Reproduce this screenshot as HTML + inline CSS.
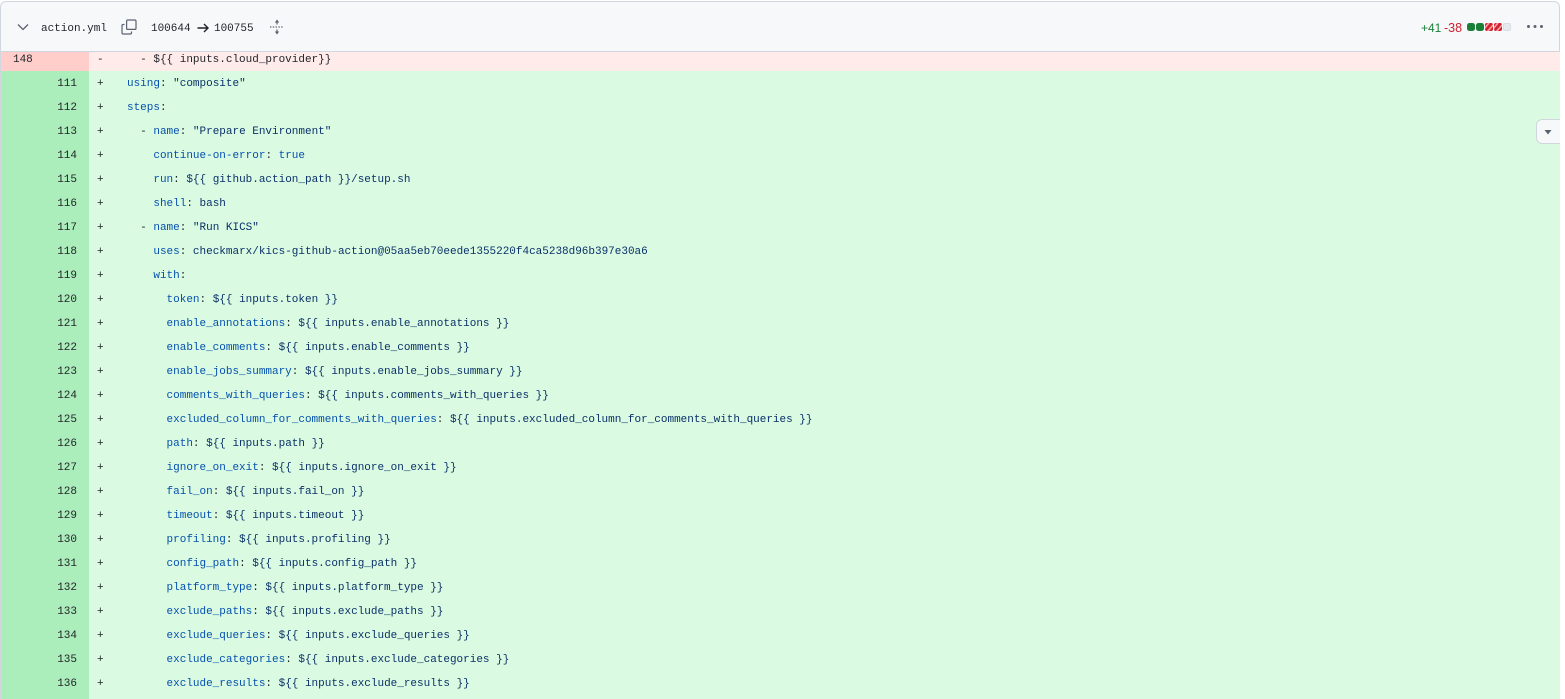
<!DOCTYPE html>
<html>
<head>
<meta charset="utf-8">
<style>
html,body{margin:0;padding:0;width:1565px;height:699px;overflow:hidden;background:#fff}
body{position:relative;font-family:"Liberation Mono",monospace;font-size:11px;letter-spacing:-.01px;color:#1f2328}
#box{position:absolute;left:0;top:0;width:1560px;height:699px;overflow:hidden}
#hdr{position:absolute;left:0;top:1px;width:1558px;height:49px;background:#f6f8fa;border:1px solid #d0d7de;border-top-left-radius:6px;border-top-right-radius:6px}
#body{position:absolute;left:0;top:52px;width:1560px;height:647px;background:#dafbe1}
#edge{position:absolute;left:0;top:52px;width:1px;height:647px;background:#d0d7de}
.a{position:absolute;white-space:pre;line-height:14px}
.row{position:absolute;left:0;width:1560px;height:24px;line-height:24px;white-space:pre}
.g{position:absolute;left:0;top:0;width:89px;height:100%;background:#aceebb}
.n{position:absolute;left:0;width:77px;text-align:right;top:1px;color:#1f2328}
.s{position:absolute;left:97px;top:1px}
.c{position:absolute;left:127px;top:1px;color:#0a3069}
.c i{font-style:normal;color:#0550ae}
.c b{font-weight:normal;color:#1f2328}
.del{top:52px;height:19px;line-height:15px;background:#ffebe9}
.del .g{background:#ffcecb}
.del .n,.del .s,.del .c{top:1px;line-height:15px}
</style>
</head>
<body>
<div id="box">
<div id="body"></div>
<div class="row del"><span class="g"></span><span class="n" style="left:13px;width:auto;text-align:left">148</span><span class="s">-</span><span class="c" style="color:#1f2328">  - ${{ inputs.cloud_provider}}</span></div>
<div class="row" style="top:71px"><span class="g"></span><span class="n">111</span><span class="s">+</span><span class="c"><i>using</i><b>:</b> "composite"</span></div>
<div class="row" style="top:95px"><span class="g"></span><span class="n">112</span><span class="s">+</span><span class="c"><i>steps</i><b>:</b></span></div>
<div class="row" style="top:119px"><span class="g"></span><span class="n">113</span><span class="s">+</span><span class="c"><b>  - </b><i>name</i><b>:</b> "Prepare Environment"</span></div>
<div class="row" style="top:143px"><span class="g"></span><span class="n">114</span><span class="s">+</span><span class="c">    <i>continue-on-error</i><b>:</b> <i>true</i></span></div>
<div class="row" style="top:167px"><span class="g"></span><span class="n">115</span><span class="s">+</span><span class="c">    <i>run</i><b>:</b> ${{ github.action_path }}/setup.sh</span></div>
<div class="row" style="top:191px"><span class="g"></span><span class="n">116</span><span class="s">+</span><span class="c">    <i>shell</i><b>:</b> bash</span></div>
<div class="row" style="top:215px"><span class="g"></span><span class="n">117</span><span class="s">+</span><span class="c"><b>  - </b><i>name</i><b>:</b> "Run KICS"</span></div>
<div class="row" style="top:239px"><span class="g"></span><span class="n">118</span><span class="s">+</span><span class="c">    <i>uses</i><b>:</b> checkmarx/kics-github-action@05aa5eb70eede1355220f4ca5238d96b397e30a6</span></div>
<div class="row" style="top:263px"><span class="g"></span><span class="n">119</span><span class="s">+</span><span class="c">    <i>with</i><b>:</b></span></div>
<div class="row" style="top:287px"><span class="g"></span><span class="n">120</span><span class="s">+</span><span class="c">      <i>token</i><b>:</b> ${{ inputs.token }}</span></div>
<div class="row" style="top:311px"><span class="g"></span><span class="n">121</span><span class="s">+</span><span class="c">      <i>enable_annotations</i><b>:</b> ${{ inputs.enable_annotations }}</span></div>
<div class="row" style="top:335px"><span class="g"></span><span class="n">122</span><span class="s">+</span><span class="c">      <i>enable_comments</i><b>:</b> ${{ inputs.enable_comments }}</span></div>
<div class="row" style="top:359px"><span class="g"></span><span class="n">123</span><span class="s">+</span><span class="c">      <i>enable_jobs_summary</i><b>:</b> ${{ inputs.enable_jobs_summary }}</span></div>
<div class="row" style="top:383px"><span class="g"></span><span class="n">124</span><span class="s">+</span><span class="c">      <i>comments_with_queries</i><b>:</b> ${{ inputs.comments_with_queries }}</span></div>
<div class="row" style="top:407px"><span class="g"></span><span class="n">125</span><span class="s">+</span><span class="c">      <i>excluded_column_for_comments_with_queries</i><b>:</b> ${{ inputs.excluded_column_for_comments_with_queries }}</span></div>
<div class="row" style="top:431px"><span class="g"></span><span class="n">126</span><span class="s">+</span><span class="c">      <i>path</i><b>:</b> ${{ inputs.path }}</span></div>
<div class="row" style="top:455px"><span class="g"></span><span class="n">127</span><span class="s">+</span><span class="c">      <i>ignore_on_exit</i><b>:</b> ${{ inputs.ignore_on_exit }}</span></div>
<div class="row" style="top:479px"><span class="g"></span><span class="n">128</span><span class="s">+</span><span class="c">      <i>fail_on</i><b>:</b> ${{ inputs.fail_on }}</span></div>
<div class="row" style="top:503px"><span class="g"></span><span class="n">129</span><span class="s">+</span><span class="c">      <i>timeout</i><b>:</b> ${{ inputs.timeout }}</span></div>
<div class="row" style="top:527px"><span class="g"></span><span class="n">130</span><span class="s">+</span><span class="c">      <i>profiling</i><b>:</b> ${{ inputs.profiling }}</span></div>
<div class="row" style="top:551px"><span class="g"></span><span class="n">131</span><span class="s">+</span><span class="c">      <i>config_path</i><b>:</b> ${{ inputs.config_path }}</span></div>
<div class="row" style="top:575px"><span class="g"></span><span class="n">132</span><span class="s">+</span><span class="c">      <i>platform_type</i><b>:</b> ${{ inputs.platform_type }}</span></div>
<div class="row" style="top:599px"><span class="g"></span><span class="n">133</span><span class="s">+</span><span class="c">      <i>exclude_paths</i><b>:</b> ${{ inputs.exclude_paths }}</span></div>
<div class="row" style="top:623px"><span class="g"></span><span class="n">134</span><span class="s">+</span><span class="c">      <i>exclude_queries</i><b>:</b> ${{ inputs.exclude_queries }}</span></div>
<div class="row" style="top:647px"><span class="g"></span><span class="n">135</span><span class="s">+</span><span class="c">      <i>exclude_categories</i><b>:</b> ${{ inputs.exclude_categories }}</span></div>
<div class="row" style="top:671px"><span class="g"></span><span class="n">136</span><span class="s">+</span><span class="c">      <i>exclude_results</i><b>:</b> ${{ inputs.exclude_results }}</span></div>
<div style="position:absolute;left:0;top:695px;width:89px;height:4px;background:#aceebb"></div>
<div id="edge"></div>

<div id="hdr"></div>
<svg style="position:absolute;left:16px;top:20px" width="14" height="14" viewBox="0 0 14 14"><path d="M2 4.500L7 9.500l5-5" fill="none" stroke="#59636e" stroke-width="1.300"/></svg>
<div class="a" style="left:41px;top:22px">action.yml</div>
<svg style="position:absolute;left:121px;top:19px" width="16" height="16" viewBox="0 0 16 16"><path d="M3.500 5.500H2.200C1.500 5.500 1 6 1 6.700v7.100c0 .7.500 1.200 1.200 1.200h7.100c.7 0 1.200-.5 1.200-1.200v-1.300" fill="none" stroke="#59636e" stroke-width="1.200"/><rect x="5.600" y="1" width="9.400" height="9.400" rx="1.200" fill="none" stroke="#59636e" stroke-width="1.200"/></svg>
<div class="a" style="left:151px;top:22px">100644</div>
<svg style="position:absolute;left:197px;top:22px" width="12" height="12" viewBox="0 0 12 12"><path d="M.5 6h10.500M7 2l4 4-4 4" fill="none" stroke="#1f2328" stroke-width="1.400"/></svg>
<div class="a" style="left:214px;top:22px">100755</div>
<svg style="position:absolute;left:269px;top:19px" width="16" height="16" viewBox="0 0 16 16"><path d="M8 .5L5.800 3.500h4.400zM8 15.500l-2.200-3h4.400z" fill="#59636e"/><path d="M8 3v2.500M8 10.500V13" stroke="#59636e" stroke-width="1.200"/><path d="M1 8h14" stroke="#59636e" stroke-width="1.200" stroke-dasharray="1.400 1.400"/></svg>

<div class="a" style="left:1421px;top:21px;font-family:'Liberation Sans',sans-serif;font-size:12px;color:#1a7f37">+41</div>
<div class="a" style="left:1444px;top:21px;font-family:'Liberation Sans',sans-serif;font-size:12.500px;color:#cf222e">-38</div>
<svg style="position:absolute;left:1467px;top:23px" width="45" height="8" viewBox="0 0 45 8">
<defs><clipPath id="q1"><rect x="18" y="0" width="8" height="8" rx="2"/></clipPath><clipPath id="q2"><rect x="27" y="0" width="8" height="8" rx="2"/></clipPath></defs>
<rect x="0" y="0" width="8" height="8" rx="2.500" fill="#1a7f37"/>
<rect x="9" y="0" width="8" height="8" rx="2.500" fill="#1a7f37"/>
<rect x="18" y="0" width="8" height="8" rx="2" fill="#cf222e"/><path d="M17 6l5-6M20 9l7-8" stroke="#ff9da4" stroke-width="1.700" clip-path="url(#q1)"/>
<rect x="27" y="0" width="8" height="8" rx="2" fill="#cf222e"/><path d="M26 6l5-6M29 9l7-8" stroke="#ff9da4" stroke-width="1.700" clip-path="url(#q2)"/>
<rect x="36.500" y=".5" width="7" height="7" rx="1.500" fill="#e6eaef" stroke="#d8dee4"/>
</svg>
<svg style="position:absolute;left:1526px;top:24px" width="18" height="6" viewBox="0 0 18 6"><circle cx="2.500" cy="2.500" r="1.500" fill="#59636e"/><circle cx="9" cy="2.500" r="1.500" fill="#59636e"/><circle cx="15.500" cy="2.500" r="1.500" fill="#59636e"/></svg>

<div style="position:absolute;left:1536px;top:119px;width:30px;height:23px;background:#f6f8fa;border:1px solid #d0d7de;border-radius:6px"></div>
<svg style="position:absolute;left:1544px;top:130px" width="8" height="5" viewBox="0 0 8 5"><path d="M.5 0h7L4 4.500z" fill="#59636e"/></svg>
</div>
</body>
</html>
